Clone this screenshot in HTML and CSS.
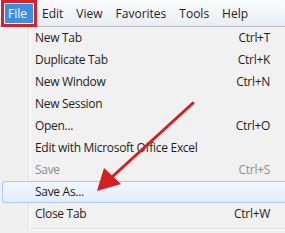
FILE: index.html
```html
<!DOCTYPE html>
<html lang="en">
<head>
    <meta charset="UTF-8">
    <title>File menu</title>
    <link rel="stylesheet" href="styles.css">
</head>
<body>

<div class="menubar">
    <span class="menubar-item active">File</span>
    <span class="menubar-item">Edit</span>
    <span class="menubar-item">View</span>
    <span class="menubar-item">Favorites</span>
    <span class="menubar-item">Tools</span>
    <span class="menubar-item">Help</span>
</div>

<div class="menu">
    <div class="menu-item"><span>New Tab</span><span class="key">Ctrl+T</span></div>
    <div class="menu-item"><span>Duplicate Tab</span><span class="key">Ctrl+K</span></div>
    <div class="menu-item"><span>New Window</span><span class="key">Ctrl+N</span></div>
    <div class="menu-item"><span>New Session</span></div>
    <div class="menu-item"><span>Open...</span><span class="key">Ctrl+O</span></div>
    <div class="menu-item"><span>Edit with Microsoft Office Excel</span></div>
    <div class="menu-item disabled"><span>Save</span><span class="key">Ctrl+S</span></div>
    <div class="menu-item hover"><span>Save As...</span></div>
    <div class="menu-item"><span>Close Tab</span><span class="key">Ctrl+W</span></div>
    <div class="separator"></div>
</div>

<!-- red annotation arrow -->
<svg class="arrow" width="285" height="233" viewBox="0 0 285 233">
    <line x1="193" y1="103" x2="112" y2="177" stroke="#d42020" stroke-width="3" stroke-linecap="round"/>
    <polygon points="97,191 104,168 121,184" fill="#d42020"/>
</svg>

</body>
</html>
```

FILE: styles.css
```css
/* General styling */
body {
    margin: 0;
    padding: 0;
    width: 285px;
    height: 233px;
    overflow: hidden;
    position: relative;
    font-family: 'Open Sans', 'Liberation Sans', sans-serif;
    font-size: 12px;
    color: #1e1e1e;
    background: #f0f0f0;
}

/* Menu bar */
.menubar {
    display: flex;
    height: 26px;
    padding-left: 5px;
    align-items: center;
    background: linear-gradient(#fbfcfd, #e9edf2);
    border-bottom: 1px solid #b8bcc2;
}
.menubar-item {
    line-height: 19px;
    margin-right: 13px;
}
.menubar-item.active {
    background-color: #3d8ee0;
    color: white;
    padding: 0 6px 0 3px;
    margin-right: 9px;
    outline: 3px solid #d8202a;
    outline-offset: 1px;
}

/* Dropdown */
.menu {
    padding-left: 2px;
    letter-spacing: -0.3px;
    background: linear-gradient(to right, #f0f0f0 28px, #e2e3e3 28px, #e2e3e3 29px, #ffffff 29px, #ffffff 30px, #f1f1f1 30px);
}
.menu-item {
    display: flex;
    justify-content: space-between;
    height: 22px;
    line-height: 22px;
    padding: 0 15px 0 32px;
    border-left: 1px solid transparent;
}
.menu-item.disabled {
    color: #8d8d8d;
}
.menu-item.hover {
    background: linear-gradient(#f1f6fd, #e3edfb);
    border: 1px solid #a9cbf2;
    border-right: none;
    border-radius: 3px 0 0 3px;
    height: 20px;
    line-height: 20px;
}
.separator {
    margin: 3px 0 0 30px;
    border-top: 1px solid #e0e0e0;
    border-bottom: 1px solid #ffffff;
}

/* Annotation */
.arrow {
    position: absolute;
    top: 0;
    left: 0;
}
```
